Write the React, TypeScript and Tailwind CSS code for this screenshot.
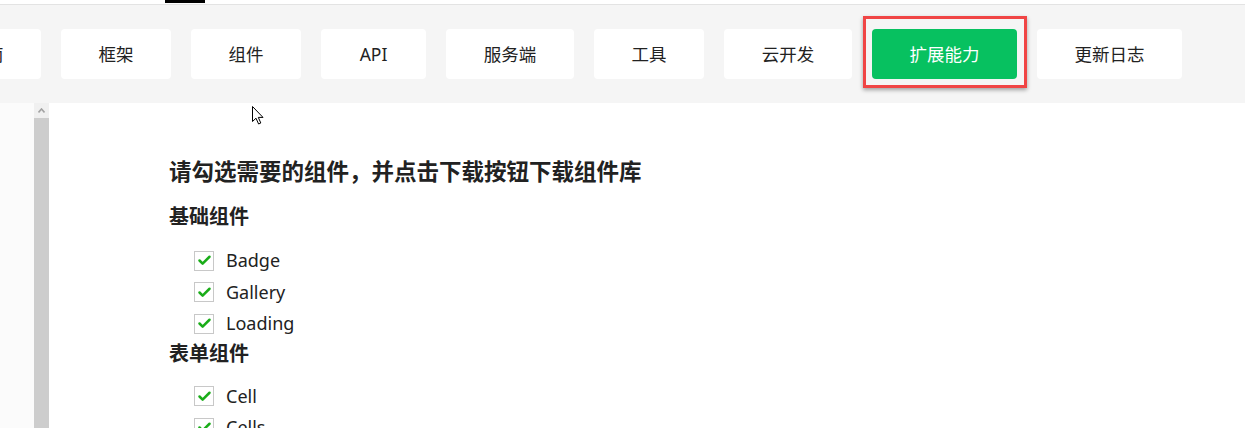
import { Check } from 'lucide-react';

const tabs = [
  { label: '指南', w: 'w-[110px]' },
  { label: '框架', w: 'w-[110px]' },
  { label: '组件', w: 'w-[110px]' },
  { label: 'API', w: 'w-[105px]' },
  { label: '服务端', w: 'w-[128px]' },
  { label: '工具', w: 'w-[110px]' },
  { label: '云开发', w: 'w-[128px]' },
  { label: '扩展能力', w: 'w-[145px]' },
  { label: '更新日志', w: 'w-[145px]' },
];

const groups = [
  { title: '基础组件', items: ['Badge', 'Gallery', 'Loading'] },
  { title: '表单组件', items: ['Cell', 'Cells'] },
];

function CheckItem({ label }: { label: string }) {
  return (
    <li className="flex items-center h-[31.5px] pl-[25px]">
      <span className="w-[20px] h-[20px] border border-[#c8c8c8] bg-white flex items-center justify-center">
        <Check className="w-[15px] h-[15px] text-[#1aad19]" strokeWidth={4} />
      </span>
      <span className="ml-[12px] text-[18px] text-[#222]">{label}</span>
    </li>
  );
}

export default function App() {
  return (
    <div
      className="relative w-[1245px] h-[428px] overflow-hidden bg-white"
      style={{ fontFamily: '"Noto Sans", "Noto Sans CJK SC", sans-serif' }}
    >
      <div className="h-[4px] bg-white border-b border-[#e3e3e3] box-content">
        <div className="ml-[165px] w-[40px] h-[3px] bg-black" />
      </div>

      <nav className="h-[98px] bg-[#f5f5f5] flex items-start pt-[24px] gap-[20px] ml-[-69px]">
        {tabs.map((t) => {
          const active = t.label === '扩展能力';
          return (
            <div key={t.label} className="relative shrink-0">
              <div
                className={
                  active
                    ? `${t.w} h-[50px] rounded-[4px] bg-[#07c160] text-white text-[17.5px] flex items-center justify-center`
                    : `${t.w} h-[50px] rounded-[4px] bg-white text-[#222] text-[17.5px] flex items-center justify-center`
                }
              >
                {t.label}
              </div>
              {active && (
                <div className="absolute top-[-13px] left-[-9px] right-[-10px] bottom-[-9px] border-[3px] border-[#f04545] shadow-[0_2px_4px_rgba(0,0,0,0.35)]" />
              )}
            </div>
          );
        })}
      </nav>

      <div className="flex h-[325px]">
        <div className="w-[34px] bg-[#fbfbfb]" />
        <div className="w-[15px] flex flex-col bg-[#cdcdcd]">
          <div className="h-[15px] bg-[#f0f0f0] flex items-center justify-center">
            <svg width="7" height="5" viewBox="0 0 7 5">
              <path d="M0.5 4.5 L3.5 1 L6.5 4.5" fill="none" stroke="#a3a3a3" strokeWidth="1.6" />
            </svg>
          </div>
        </div>
        <main className="flex-1 pl-[120px] pt-[53px]">
          <h1 className="text-[22.5px] font-bold text-[#222] leading-[32px]">
            请勾选需要的组件，并点击下载按钮下载组件库
          </h1>
          {groups.map((g, i) => (
            <section key={g.title} className={i === 0 ? 'mt-[15px]' : ''}>
              <h2 className="text-[20px] font-bold text-[#222] leading-[28px]">{g.title}</h2>
              <ul className={i === 0 ? 'mt-[14px]' : 'mt-[13px]'}>
                {g.items.map((it) => (
                  <CheckItem key={it} label={it} />
                ))}
              </ul>
            </section>
          ))}
        </main>
      </div>

      <svg
        className="absolute left-[252px] top-[106px]"
        width="13"
        height="19"
        viewBox="0 0 13 19"
      >
        <path
          d="M0.5 0.5 L0.5 15.5 L4 12.2 L6.6 18 L8.8 17 L6.3 11.4 L11 11.4 Z"
          fill="#fff"
          stroke="#000"
          strokeWidth="1"
          strokeLinejoin="round"
        />
      </svg>
    </div>
  );
}
